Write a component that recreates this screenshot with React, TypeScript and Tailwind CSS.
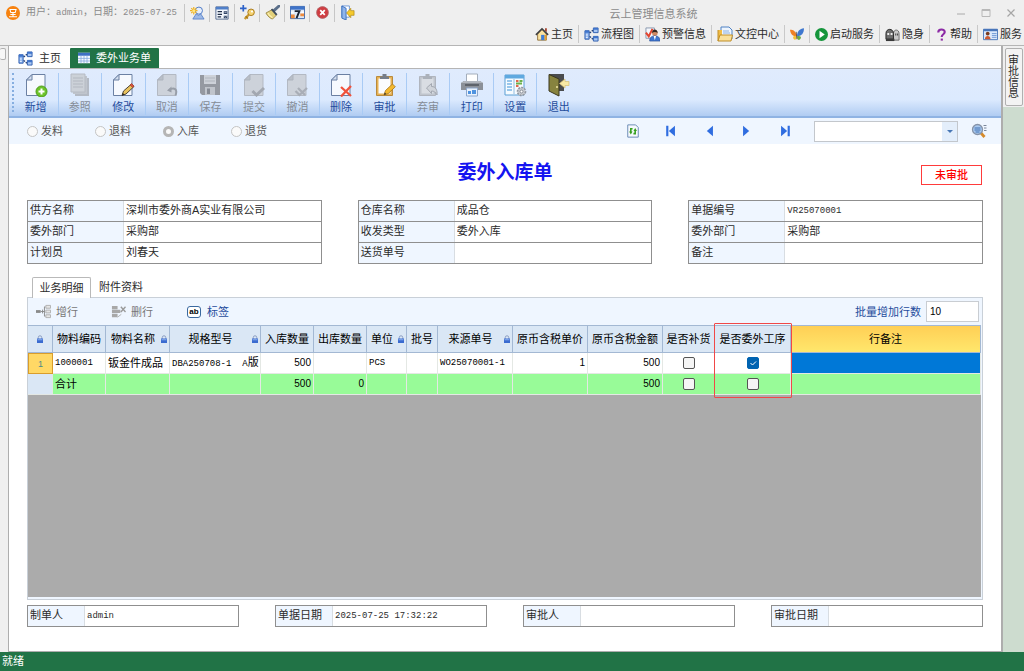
import type { ReactNode } from "react";

const Svg = ({ size = 14, box = 16, children }: { size?: number; box?: number; children: ReactNode }) => (
  <svg width={size} height={size} viewBox={`0 0 ${box} ${box}`} className="shrink-0" fill="none" aria-hidden="true">
    {children}
  </svg>
);

/* ---------- small icons ---------- */

const LogoIcon = () => (
  <Svg size={14}>
    <circle cx="8" cy="8" r="8" fill="#f7820f" />
    <path d="M4.500 4h7l-1 3.500h-5zM8 7.500V12M5 9.700h6M3.500 12.300h9" stroke="#fff" strokeWidth="1.200" />
  </Svg>
);
const UserIcon = () => (
  <Svg size={15}>
    <path d="M3 15l3.500-5.500L9 11l2.500-1.500L15 15z" fill="#9db9e6" stroke="#4a76c4" strokeWidth=".8" />
    <circle cx="9.500" cy="6" r="3.800" fill="#e7effb" stroke="#4a76c4" />
    <path d="M4 2v8M0 6h8M1.300 3.300l5.400 5.400M6.700 3.300L1.300 8.700" stroke="#f0b323" strokeWidth="1.300" />
    <circle cx="4" cy="6" r="1.600" fill="#ffe680" />
  </Svg>
);
const FormIcon = () => (
  <Svg>
    <path d="M1 1h14v14H1z" fill="#f3f7fd" stroke="#4a6288" />
    <path d="M1 1h14v3H1z" fill="#4f7fc9" />
    <path d="M3 6.500h5M3 9.500h5M3 12.500h4" stroke="#22304a" strokeWidth="1.500" />
    <path d="M10 6h4v3h-4zM10 11h4v3h-4z" fill="#2f4366" />
    <path d="M11 7l1 1 1-1M11 12l1 1 1-1" stroke="#fff" strokeWidth=".7" />
  </Svg>
);
const KeyIcon = () => (
  <Svg size={15}>
    <path d="M3.500 0v7M0 3.500h7" stroke="#2d62c8" strokeWidth="1.800" />
    <path d="M10 9.500L5 15" stroke="#c99a2e" strokeWidth="2.400" />
    <circle cx="11.800" cy="7.800" r="3.500" fill="#f5d372" stroke="#a9791a" />
    <circle cx="12.800" cy="7" r="1.100" fill="#fff" />
    <path d="M6 12l2.500 2.500" stroke="#a9791a" strokeWidth="1.500" />
  </Svg>
);
const BrushIcon = () => (
  <Svg size={15}>
    <path d="M15 1l-5.500 5" stroke="#5b6f8a" strokeWidth="3" strokeLinecap="round" />
    <path d="M1 8.500L7.500 5l5 5.500L8 15c-2-.5-5.500-3-7-6.500z" fill="#e3d079" stroke="#8e7a35" strokeWidth=".8" />
    <path d="M7 4.500l5.500 6" stroke="#3e4c5c" strokeWidth="2" />
    <path d="M3 8.500c1.500 2.500 3 4 5 5" stroke="#fff3b5" strokeWidth="1.200" />
  </Svg>
);
const CalendarIcon = () => (
  <Svg size={15}>
    <path d="M.5 1.500h15v13H.5z" fill="#dfe9f8" stroke="#3f66a8" />
    <path d="M.5 1.500h15V5H.5z" fill="#3f74c9" />
    <path d="M1 7h3v2H1zM12 7h3v2h-3z" fill="#fff" />
    <path d="M1 10h4v4H1zM11 9h4v3h-4z" fill="#ee8b3d" />
    <path d="M5 6.500h5L7 14" stroke="#1c2433" strokeWidth="2" />
  </Svg>
);
const CloseIcon = () => (
  <Svg size={13}>
    <circle cx="8" cy="8" r="7.300" fill="#cf3d42" stroke="#b06a6c" />
    <path d="M5.200 5.200l5.600 5.600M10.800 5.200l-5.600 5.600" stroke="#fff" strokeWidth="2.200" />
  </Svg>
);
const LogoutIcon = () => (
  <Svg size={15}>
    <path d="M2 1h8v12H2z" fill="#fff" stroke="#6c96d6" />
    <path d="M2 1l4.500 2.500V16L2 14z" fill="#8fb5ec" stroke="#2e65b8" strokeWidth=".9" />
    <path d="M15 6v5h-3.500v2.500L7 8.500l4.500-5V6z" fill="#f5c92c" stroke="#a98412" strokeWidth=".7" />
  </Svg>
);
const HomeIcon = () => (
  <Svg>
    <path d="M3 8v7h10V8L8 3z" fill="#fbe3a0" stroke="#8a6a35" />
    <path d="M11.500 1.500h2V6l-2-2z" fill="#a33d28" />
    <path d="M1 9l7-7 7 7" stroke="#3f3f3f" strokeWidth="1.800" />
    <path d="M7 9h4v6H7z" fill="#3f7ed6" />
    <path d="M11 9h2v6h-2z" fill="#eea22b" />
  </Svg>
);
const FlowIcon = () => (
  <Svg size={15}>
    <path d="M1 4h4.500v9H1z" fill="#8db4ee" stroke="#2f5eaf" />
    <path d="M10 1h5v5h-5zM10 10h5v5h-5z" fill="#a9c7f3" stroke="#2f5eaf" />
    <path d="M10 1h5v2h-5zM10 10h5v2h-5zM1 4h4.500v2H1z" fill="#3f74cc" />
    <path d="M6 6.500l3.500-3M6 10l3.500 3" stroke="#1d3a72" strokeWidth="1.400" strokeDasharray="2 1" />
    <path d="M2 8.500h2M2 11h2" stroke="#fff" />
  </Svg>
);
const AlertIcon = () => (
  <Svg size={15}>
    <path d="M1 1h9v11H1z" fill="#f4f7fc" stroke="#8796ad" />
    <path d="M1 6l3 4 4-8" stroke="#e2452f" strokeWidth="2.200" />
    <circle cx="10.500" cy="6.500" r="3" fill="#d08a62" />
    <path d="M7.500 6.500c0-5 6-5 6 0-1.500-1.500-4.500-1.500-6 0z" fill="#35261f" />
    <path d="M5 15c0-4 2-5.500 5.500-5.500S16 11 16 15z" fill="#3f76cf" stroke="#274f97" strokeWidth=".7" />
    <path d="M9.200 9.700l1.300 4.300 1.300-4.300z" fill="#fff" />
  </Svg>
);
const DocIcon = () => (
  <Svg size={16}>
    <path d="M4 1h8l3 3v9H4z" fill="#eef5fd" stroke="#4f82c4" />
    <path d="M1 4h4v9H1z" fill="#f0bb45" />
    <path d="M6 5h6M6 7h7" stroke="#8cb0e0" />
    <path d="M1 15l2-6h12.500l-1.500 6z" fill="#fae09a" stroke="#c08f28" />
    <path d="M1 15V4" stroke="#c08f28" />
  </Svg>
);
const ButterflyIcon = () => (
  <Svg>
    <path d="M8 10.500C6 4 4 3 0 3c.5 5 3 7.500 8 7.500z" fill="#f08024" />
    <path d="M8 10.500C8 5 11 2 16 1.500c0 6-3 9-8 9z" fill="#3f78cf" />
    <path d="M7.500 10C4.500 9.500 2.500 11 4 13.500 6 16 8 13.500 7.500 10z" fill="#f6c13a" />
    <path d="M8 10.500c3.500-1 5.500.5 4 3-1.500 2.500-4 1-4-3z" fill="#6bab45" />
    <path d="M7 5.500l1 8.500" stroke="#5c4638" />
  </Svg>
);
const PlayIcon = () => (
  <Svg size={13}>
    <circle cx="8" cy="8" r="8" fill="#15953b" />
    <path d="M5.500 3.500l6.500 4.500-6.500 4.500z" fill="#fff" />
  </Svg>
);
const GhostIcon = () => (
  <Svg size={15}>
    <path d="M9 14V7c0-5 6-5 6 0v7z" fill="#c9c9c9" stroke="#6a6a6a" />
    <path d="M1 13V7c0-6 8-6 8 0v6z" fill="#6d6d6d" stroke="#262626" />
    <path d="M1 12.500h9V15H1z" fill="#3a3a3a" />
    <path d="M2.500 6.500h2v2h-2zM6 6.500h2v2H6z" fill="#eee" />
    <path d="M11 7h1v2h-1zM13 7h1v2h-1z" fill="#333" />
  </Svg>
);
const HelpIcon = () => (
  <Svg size={13}>
    <path d="M4 5.500C4 .8 12 .8 12 5c0 2.700-3.800 2.700-3.800 6" stroke="#8c2aa5" strokeWidth="2.600" />
    <path d="M7 13h2.700v2.500H7z" fill="#8c2aa5" />
  </Svg>
);
const CardIcon = () => (
  <Svg size={15}>
    <path d="M.5 2.500h15v11H.5z" fill="#dce9fb" stroke="#4976ba" />
    <path d="M.5 2h15v2.500H.5z" fill="#4976ba" />
    <path d="M9.500 7h5M9.500 9h5M9.500 11h5" stroke="#6f97d4" />
    <circle cx="5" cy="7" r="2" fill="#7b3b20" />
    <path d="M2 13c0-4.500 6-4.500 6 0z" fill="#cd5a32" />
  </Svg>
);
const GridIcon = () => (
  <Svg size={12}>
    <path d="M0 1h16v14H0z" fill="#f4f8ff" />
    <path d="M0 1h16v4H0z" fill="#3f70c4" />
    <path d="M0 8.500h16M0 12h16M4 5v10M8 5v10M12 5v10" stroke="#7fa4dc" />
  </Svg>
);
const RefreshIcon = () => (
  <Svg>
    <path d="M2 1h9l3 3v11H2z" fill="#f6f9fd" stroke="#5d7fae" />
    <path d="M7.500 5.500H5.500V9M8.500 11h2V7.500" stroke="#36a01d" strokeWidth="1.800" />
    <path d="M3.500 8.500h4L5.500 12zM8.500 8h4l-2-3.500z" fill="#36a01d" />
  </Svg>
);
const NavIcon = ({ flip = false, bar = false }: { flip?: boolean; bar?: boolean }) => (
  <Svg>
    <g transform={flip ? "matrix(-1 0 0 1 16 0)" : undefined}>
      <path d="M12.500 2v12L5.500 8z" fill="#2f6de0" />
      {bar && <path d="M2.500 2H5v12H2.500z" fill="#2f6de0" />}
    </g>
  </Svg>
);
const SearchIcon = () => (
  <Svg size={16}>
    <path d="M9.500 9.500l4 4.500" stroke="#d68a2a" strokeWidth="2.800" />
    <circle cx="6.500" cy="6.500" r="5" fill="#a9c9ef" stroke="#8693a8" strokeWidth="1.300" />
    <path d="M3.500 5h6M3.500 7h6M4.500 9h4" stroke="#3e6fb0" />
    <path d="M12.500 2.500h3M13 5h2.500M13 7.500h2.500" stroke="#7b879a" />
  </Svg>
);
const LockIcon = () => (
  <Svg size={8}>
    <path d="M4.500 8V5a3.500 3.500 0 017 0v3" stroke="#8d9fc4" strokeWidth="2" />
    <path d="M2 7h12v9H2z" fill="#3a6bd0" />
    <path d="M3 9.500h10" stroke="#8db0ee" strokeWidth="2" />
  </Svg>
);
const AddRowIcon = () => (
  <Svg size={15}>
    <path d="M0 6.500h5v3H0z" fill="#8a8a8a" />
    <path d="M5 8h4M7 6v4M10 3H9v10h1" stroke="#8a8a8a" />
    <path d="M10.500 1.500h5v3h-5zM10.500 6.500h5v3h-5zM10.500 11.500h5v3h-5z" fill="#e6e6e6" stroke="#b0b0b0" />
  </Svg>
);
const DelRowIcon = () => (
  <Svg size={15}>
    <path d="M1 2h6v3.500H1zM1 6h9v3.500H1zM1 10.500h6V14H1z" fill="#a8a8a8" />
    <path d="M7 14l4-3" stroke="#b0b0b0" />
    <path d="M10.500 3l5 5.500M15.500 3l-5 5.500" stroke="#9a9a9a" strokeWidth="1.500" />
  </Svg>
);

/* ---------- toolbar icons, 24 unit box ---------- */

const Page = ({ gray = false }: { gray?: boolean }) => (
  <>
    <path d="M8 1.500h13v21H2.500V7z" fill={gray ? "#cdd2da" : "#f6f9fe"} stroke={gray ? "#b3b9c3" : "#6b80a3"} />
    <path d="M8 1.500V7H2.500z" fill={gray ? "#b9bfc8" : "#d3deee"} stroke={gray ? "#adb3bd" : "#6b80a3"} />
  </>
);
const Clip = ({ gray = false }: { gray?: boolean }) => (
  <>
    <path d="M3.500 3.500h16v19h-16z" fill={gray ? "#c0c5cd" : "#e6b154"} stroke={gray ? "#b0b5be" : "#b98a3c"} />
    <path d="M5.500 5.500h12v15h-12z" fill={gray ? "#d9dde3" : "#fbfcff"} />
    <path d="M7 6V3.500h2.500V1h4v2.500H16V6z" fill={gray ? "#abb1ba" : "#767e8a"} />
  </>
);

const toolIcons: Record<string, ReactNode> = {
  add: (
    <>
      <Page />
      <circle cx="17.500" cy="18.500" r="5.500" fill="#6cc32a" stroke="#4d9c1a" />
      <path d="M17.500 15.500v6M14.500 18.500h6" stroke="#fff" strokeWidth="2" />
    </>
  ),
  refer: (
    <>
      <path d="M7 5h14v18H7z" fill="#b4bac4" />
      <path d="M5 3h14v18H5z" fill="#c0c5cd" />
      <path d="M3 1h14v18H3z" fill="#ccd1d8" stroke="#b6bbc4" />
      <path d="M5 5h10M5 8h10M5 11h10M5 14h10" stroke="#b3b8c1" />
    </>
  ),
  edit: (
    <>
      <Page />
      <path d="M11 22.500l1.500-4.500 8-7 2.500 2.500-8 7.500z" fill="#e8c25c" stroke="#4d4436" />
      <path d="M19 12l1.500-1.500L23 13l-1.500 1.500z" fill="#d9543f" stroke="#a23a2a" strokeWidth=".6" />
      <path d="M11 22.500l.8-2.500 1.700 1.500z" fill="#222" />
    </>
  ),
  cancel: (
    <>
      <Page gray />
      <path d="M14 17c5-3 9-1 6.500 5.500" stroke="#989ea8" strokeWidth="2" />
      <path d="M12 17.500l4.500-4v6z" fill="#989ea8" />
    </>
  ),
  save: (
    <>
      <path d="M2 2h20v20H4l-2-2z" fill="#9599a1" />
      <path d="M6 2h12v9H6z" fill="#cdd1d8" />
      <path d="M7 14h10v8H7z" fill="#c0c4cb" />
      <path d="M9 15.500h3V21H9z" fill="#868b94" />
      <path d="M7 5h10M7 8h10" stroke="#b1b6be" />
    </>
  ),
  submit: (
    <>
      <Page gray />
      <path d="M10.500 18l4 4 7.500-7" stroke="#a3a8b1" strokeWidth="3" />
    </>
  ),
  revoke: (
    <>
      <Page gray />
      <path d="M10.500 18l4 4 7.500-7M13 15l7 7" stroke="#a9aeb7" strokeWidth="2.300" />
    </>
  ),
  remove: (
    <>
      <Page />
      <path d="M12 14l10 9M22 13L12 23.500" stroke="#f0523c" strokeWidth="2.300" />
    </>
  ),
  approve: (
    <>
      <Clip />
      <path d="M11 22l1.500-4.500 7-6.500 2.800 2.800-7 6.700z" fill="#f4b92e" stroke="#a3731a" strokeWidth=".8" />
      <path d="M11 22l.8-2.500 1.600 1.500z" fill="#333" />
    </>
  ),
  unapprove: (
    <>
      <Clip gray />
      <path d="M10.500 15l5-4.500v3c4.500 0 6 4 5.500 8.500-1.500-3-3-4-5.500-4v2.500z" fill="#cfd3d9" stroke="#a3a8b1" />
    </>
  ),
  print: (
    <>
      <path d="M6.500 1h11v9h-11z" fill="#fff" stroke="#a3adbb" />
      <path d="M1 10l3-2h16l3 2v7H1z" fill="#8b9098" />
      <path d="M4 8h16l3 2H1z" fill="#b0b5bd" />
      <path d="M5 12h14" stroke="#5e636b" strokeWidth="2" />
      <path d="M6.500 15h11v8h-11z" fill="#e9f2fd" stroke="#8ea7cb" />
      <path d="M8 18h3v3H8zM12 17h4v4h-4z" fill="#4f93e0" />
    </>
  ),
  setup: (
    <>
      <path d="M2 2h19v20H2z" fill="#f6fbff" stroke="#5b9fd4" />
      <path d="M2 2h19v3.500H2z" fill="#5fa9e0" />
      <path d="M4 8h5M4 11h5M4 14h5M4 17h5" stroke="#79b5e5" strokeWidth="1.500" />
      <path d="M11 6v15" stroke="#92bde0" />
      <path d="M13 8h2.500M13 13h2.500" stroke="#e2664b" strokeWidth="2" />
      <path d="M16.500 8h3M13 10.500h6" stroke="#6cb04b" strokeWidth="2" />
      <circle cx="18.500" cy="18.500" r="4" fill="#c9ccd1" stroke="#9298a1" strokeWidth="1.600" strokeDasharray="2 1" />
      <circle cx="18.500" cy="18.500" r="1.500" fill="#fff" stroke="#888e97" />
    </>
  ),
  exit: (
    <>
      <path d="M2 1h15v17H2z" fill="#4a4c4e" />
      <path d="M2 1.500l10 4.500v17L2 18z" fill="#87833f" stroke="#3b371e" />
      <path d="M10 13v2" stroke="#f2e6a4" strokeWidth="1.500" />
      <path d="M22 8.500v4h-4V15l-5.500-4.500L18 6v2.500z" fill="#f8e9a6" stroke="#d6bf74" strokeWidth=".7" />
    </>
  ),
};

/* ---------- data ---------- */

const quick = [
  { name: "切换用户", icon: <UserIcon /> },
  { name: "表单", icon: <FormIcon /> },
  { name: "修改密码", icon: <KeyIcon /> },
  { name: "清理", icon: <BrushIcon /> },
  { name: "日历", icon: <CalendarIcon /> },
  { name: "关闭", icon: <CloseIcon /> },
  { name: "注销", icon: <LogoutIcon /> },
];

const menu = [
  { text: "主页", icon: <HomeIcon /> },
  { text: "流程图", icon: <FlowIcon /> },
  { text: "预警信息", icon: <AlertIcon /> },
  { text: "文控中心", icon: <DocIcon /> },
  { text: "", icon: <ButterflyIcon /> },
  { text: "启动服务", icon: <PlayIcon /> },
  { text: "隐身", icon: <GhostIcon /> },
  { text: "帮助", icon: <HelpIcon /> },
  { text: "服务", icon: <CardIcon /> },
];

const tools = [
  { text: "新增", icon: "add" },
  { text: "参照", icon: "refer", off: true },
  { text: "修改", icon: "edit" },
  { text: "取消", icon: "cancel", off: true },
  { text: "保存", icon: "save", off: true },
  { text: "提交", icon: "submit", off: true },
  { text: "撤消", icon: "revoke", off: true },
  { text: "删除", icon: "remove" },
  { text: "审批", icon: "approve" },
  { text: "弃审", icon: "unapprove", off: true },
  { text: "打印", icon: "print" },
  { text: "设置", icon: "setup" },
  { text: "退出", icon: "exit" },
];

type Field = { label: string; value: string; latin?: boolean };

const groups: Field[][] = [
  [
    { label: "供方名称", value: "深圳市委外商A实业有限公司" },
    { label: "委外部门", value: "采购部" },
    { label: "计划员", value: "刘春天" },
  ],
  [
    { label: "仓库名称", value: "成品仓" },
    { label: "收发类型", value: "委外入库" },
    { label: "送货单号", value: "" },
  ],
  [
    { label: "单据编号", value: "VR25070001", latin: true },
    { label: "委外部门", value: "采购部" },
    { label: "备注", value: "" },
  ],
];

const footer: Field[] = [
  { label: "制单人", value: "admin", latin: true },
  { label: "单据日期", value: "2025-07-25 17:32:22", latin: true },
  { label: "审批人", value: "" },
  { label: "审批日期", value: "" },
];

const columns: { name: string; width: string; lock?: boolean }[] = [
  { name: "物料编码", width: "w-[53px]" },
  { name: "物料名称", width: "w-[64px]", lock: true },
  { name: "规格型号", width: "w-[91px]", lock: true },
  { name: "入库数量", width: "w-[53px]" },
  { name: "出库数量", width: "w-[53px]" },
  { name: "单位", width: "w-[40px]", lock: true },
  { name: "批号", width: "w-[31px]" },
  { name: "来源单号", width: "w-[75px]", lock: true },
  { name: "原币含税单价", width: "w-[75px]" },
  { name: "原币含税金额", width: "w-[75px]" },
  { name: "是否补货", width: "w-[52px]" },
];

const mono = "font-['Liberation_Mono','Noto_Sans_CJK_SC',monospace] text-[9px]";

const FieldRow = ({ id, field, narrow = false }: { id: string; field: Field; narrow?: boolean }) => (
  <div className="flex h-[21px] border-b border-[#8f8f8f]">
    <label
      htmlFor={id}
      className={`${narrow ? "w-[57px]" : "w-24"} shrink-0 border-r border-[#d8dde2] bg-[#eff6ff] pl-[2px] leading-[19px]`}
    >
      {field.label}
    </label>
    <input
      id={id}
      defaultValue={field.value}
      className={`min-w-0 flex-1 bg-white px-[2px] outline-none ${field.latin ? mono : "pb-[2px]"}`}
    />
  </div>
);

const Check = ({ label, checked = false }: { label: string; checked?: boolean }) => (
  <span className="mx-auto grid size-3 place-items-center">
    <input
      type="checkbox"
      aria-label={label}
      defaultChecked={checked}
      className="peer col-start-1 row-start-1 size-3 appearance-none rounded-[2px] border border-[#555] bg-[#f5f5f5] checked:border-[#0063b1] checked:bg-[#0063b1]"
    />
    <svg
      viewBox="0 0 12 12"
      fill="none"
      className="pointer-events-none invisible col-start-1 row-start-1 size-3 peer-checked:visible"
    >
      <path d="M3.500 6l2 2 3.500-3.500" stroke="#fff" />
    </svg>
  </span>
);

export default function App() {
  return (
    <div className="flex h-screen flex-col overflow-hidden bg-[#efefef] font-['Liberation_Sans','Noto_Sans_CJK_SC',sans-serif] text-[11px] leading-4 text-[#2b2b2b]">
      <header className="shrink-0 border-b border-[#b5b5b5]">
        <div className="flex h-[25px] items-center text-[#8b8b8b]">
          <div className="flex w-[184px] items-center gap-[6px] pl-[6px]">
            <LogoIcon />
            <span className="flex-1 text-[10px] whitespace-nowrap">
              用户：<span className={mono}>admin</span>，日期：<span className={mono}>2025-07-25</span>
            </span>
          </div>
          <nav className="flex" aria-label="快捷工具">
            {quick.map((q) => (
              <button key={q.name} aria-label={q.name} className="grid h-[18px] w-[25px] place-items-center border-l border-[#c6c6c6]">
                {q.icon}
              </button>
            ))}
          </nav>
          <h1 className="flex-1 pt-[3px] text-center">云上管理信息系统</h1>
          <div className="flex w-[76px]">
            <button aria-label="最小化" className="grid h-5 w-[25px] place-items-center">
              <Svg size={10} box={10}><path d="M1 6h8" stroke="#aaa" /></Svg>
            </button>
            <button aria-label="最大化" className="grid h-5 w-[25px] place-items-center">
              <Svg size={10} box={10}><path d="M1 1.500h8v7H1zM1 2.500h8" stroke="#b8b8b8" /></Svg>
            </button>
            <button aria-label="关闭窗口" className="grid h-5 w-[25px] place-items-center">
              <Svg size={10} box={10}><path d="M1.500 1.500l7 7M8.500 1.500l-7 7" stroke="#a5a5a5" strokeWidth="1.200" /></Svg>
            </button>
          </div>
        </div>
        <nav className="flex h-5 items-start justify-end" aria-label="主菜单">
          {menu.map((m, i) => (
            <button
              key={i}
              aria-label={m.text || "皮肤"}
              className={`flex h-[18px] items-center gap-[2px] pr-[5px] pl-[5px] last:pr-[2px] ${i ? "border-l border-[#c9c9c9]" : ""}`}
            >
              {m.icon}
              {m.text && <span>{m.text}</span>}
            </button>
          ))}
        </nav>
      </header>

      <div className="flex min-h-0 flex-1">
        <aside className="w-2 shrink-0">
          <div className="mt-[2px] h-3 w-[6px] rounded-[2px] border border-l-0 border-[#b0b0b0] bg-[#f7f7f7]" />
        </aside>

        <main className="flex min-w-0 flex-1 flex-col border-r-2 border-b border-l border-[#adadad] bg-white">
          <div className="flex h-[23px] shrink-0 items-end border-b border-[#b5b5b5]">
            <button className="flex h-5 w-[61px] items-center gap-[6px] pl-[9px]">
              <FlowIcon />
              主页
            </button>
            <button className="flex h-5 items-center gap-[6px] rounded-t-[1px] bg-[#217346] px-2 text-white">
              <GridIcon />
              委外业务单
            </button>
          </div>

          <div className="flex h-[49px] shrink-0 items-stretch border-b-2 border-[#8fb3e3] bg-linear-to-b from-[#e0ebfd] via-[#dceafe] via-65% to-[#b0ccf2] py-1 pl-[3px]">
            <div className="w-[2px] border-l-2 border-dotted border-[#86aee0]" />
            <div className="grid w-[566px] grid-cols-13">
              {tools.map((t, i) => (
                <button
                  key={t.text}
                  disabled={t.off}
                  className={`flex flex-col items-center gap-[2px] whitespace-nowrap ${i ? "border-l border-[#a9cbf5]" : ""} ${t.off ? "text-[#858c96]" : "text-[#1f4c9c]"}`}
                >
                  <Svg size={24} box={24}>{toolIcons[t.icon]}</Svg>
                  <span>{t.text}</span>
                </button>
              ))}
            </div>
          </div>

          <div className="flex h-[26px] shrink-0 items-center bg-[#eff6ff] pr-3 pl-[18px]">
            <fieldset className="flex">
              {["发料", "退料", "入库", "退货"].map((r) => (
                <label key={r} className="flex w-[68px] items-center gap-[3px] text-[#555]">
                  <input
                    type="radio"
                    name="kind"
                    defaultChecked={r === "入库"}
                    className="size-[11px] appearance-none rounded-full border border-[#c4c4c4] bg-[#fafafa] checked:border-[3px] checked:border-[#b5b5b5]"
                  />
                  {r}
                </label>
              ))}
            </fieldset>
            <div className="ml-auto flex items-center">
              <button aria-label="刷新" className="grid w-[38px] place-items-center"><RefreshIcon /></button>
              <button aria-label="首张" className="grid w-[38px] place-items-center"><NavIcon bar /></button>
              <button aria-label="上一张" className="grid w-[38px] place-items-center"><NavIcon /></button>
              <button aria-label="下一张" className="grid w-[38px] place-items-center"><NavIcon flip /></button>
              <button aria-label="末张" className="grid w-[38px] place-items-center"><NavIcon flip bar /></button>
              <div className="mr-[11px] ml-[10px] grid w-36">
                <select
                  aria-label="查询条件"
                  className="col-start-1 row-start-1 h-[21px] appearance-none border border-[#c3c7cc] bg-white outline-none"
                >
                  <option value=""></option>
                </select>
                <span className="pointer-events-none col-start-1 row-start-1 m-[1px] grid w-[15px] place-items-center justify-self-end bg-[#e3eefb]">
                  <Svg size={6} box={6}><path d="M0 2h6L3 5z" fill="#4877b5" /></Svg>
                </span>
              </div>
              <button aria-label="查找" className="grid w-5 place-items-center"><SearchIcon /></button>
            </div>
          </div>

          <div className="flex min-h-0 flex-1 flex-col px-[18px] pb-6">
            <div className="grid h-14 shrink-0 grid-cols-[1fr_auto_1fr] items-start pt-[15px]">
              <h2 className="col-start-2 text-[19px] leading-7 font-bold text-[#1414f0]">委外入库单</h2>
              <span className="mt-[6px] mr-[1px] w-[61px] justify-self-end border border-[#ff3b3b] text-center leading-[18px] font-medium text-[#f00]">
                未审批
              </span>
            </div>

            <div className="grid shrink-0 grid-cols-3 gap-9">
              {groups.map((g, gi) => (
                <div key={gi} className="border border-b-0 border-[#8f8f8f]">
                  {g.map((f, fi) => (
                    <FieldRow key={fi} id={`head-${gi}-${fi}`} field={f} />
                  ))}
                </div>
              ))}
            </div>

            <div className="mt-[11px] flex h-[22px] shrink-0 items-end pl-[5px]" role="tablist">
              <button role="tab" aria-selected="true" className="z-10 -mb-px h-[21px] w-[59px] rounded-t-[2px] border border-b-0 border-[#b9b9b9] bg-white">
                业务明细
              </button>
              <button role="tab" aria-selected="false" className="h-5 px-2">附件资料</button>
            </div>

            <section className="flex min-h-0 flex-1 flex-col border border-[#c9d0d8] bg-[#eff6ff]">
              <div className="flex h-[27px] shrink-0 items-center pl-2 text-[#777]">
                <button disabled className="flex w-[75px] items-center gap-[5px]"><AddRowIcon />增行</button>
                <button disabled className="flex w-[76px] items-center gap-[5px]"><DelRowIcon />删行</button>
                <button className="flex items-center gap-[6px] text-[#1f4c9c]">
                  <span className="grid h-3 w-[14px] place-items-center rounded-[3px] border border-[#3a699f] bg-white text-[8px] leading-none font-bold text-black">
                    ab
                  </span>
                  标签
                </button>
                <label htmlFor="rows" className="ml-auto text-[#1f4c9c]">批量增加行数</label>
                <input id="rows" defaultValue="10" className="mr-[3px] ml-[5px] h-[21px] w-[53px] border border-[#c9cdd2] bg-white px-[3px] text-[10px] text-black outline-none" />
              </div>
              <div className="mr-[1px] mb-[2px] min-h-0 flex-1 bg-[#ababab]">
                <table className="w-full table-fixed border-separate border-spacing-0 text-black [&_td]:border-r [&_td]:border-b [&_td]:border-[#e4e8e4] [&_td]:px-[2px] [&_td]:whitespace-nowrap [&_th]:border-t [&_th]:border-r [&_th]:border-b [&_th]:border-[#a3b8d3] [&_th]:font-normal">
                  <thead>
                    <tr className="h-7 bg-[#dae7f5]">
                      <th className="w-[25px]"><span className="flex justify-center"><LockIcon /></span></th>
                      {columns.map((c) => (
                        <th key={c.name} className={`${c.width} whitespace-nowrap`}>
                          <span className="flex items-center justify-center">
                            <span className="flex-1">{c.name}</span>
                            {c.lock && <span className="pr-[1px]"><LockIcon /></span>}
                          </span>
                        </th>
                      ))}
                      <th className="relative w-[76px] whitespace-nowrap">
                        是否委外工序
                        <span className="pointer-events-none absolute -top-[3px] -left-[1px] h-[75px] w-[78px] rounded-[1px] border border-[#f04848]" />
                      </th>
                      <th className="bg-linear-to-b from-[#ffcf55] to-[#ffe76c]">行备注</th>
                    </tr>
                  </thead>
                  <tbody>
                    <tr className="h-[21px] bg-white">
                      <td className="border border-[#d99d2b]! bg-[#ffd865] text-center text-[9px] text-[#4a8a8a]">1</td>
                      <td className={mono}>1000001</td>
                      <td>钣金件成品</td>
                      <td className="leading-3"><span className={mono}>DBA250708-1&nbsp; A</span>版</td>
                      <td className="text-right text-[10px]">500</td>
                      <td></td>
                      <td className={mono}>PCS</td>
                      <td></td>
                      <td className={mono}>WO25070001-1</td>
                      <td className="text-right text-[10px]">1</td>
                      <td className="text-right text-[10px]">500</td>
                      <td><Check label="是否补货" /></td>
                      <td><Check label="是否委外工序" checked /></td>
                      <td className="bg-[#0078d7]"></td>
                    </tr>
                    <tr className="h-[21px] bg-[#98fb98]">
                      <td className="bg-[#dae7f5]"></td>
                      <td>合计</td>
                      <td></td>
                      <td></td>
                      <td className="text-right text-[10px]">500</td>
                      <td className="text-right text-[10px]">0</td>
                      <td></td>
                      <td></td>
                      <td></td>
                      <td></td>
                      <td className="text-right text-[10px]">500</td>
                      <td><Check label="合计是否补货" /></td>
                      <td><Check label="合计是否委外工序" /></td>
                      <td></td>
                    </tr>
                  </tbody>
                </table>
              </div>
            </section>

            <div className="mt-[5px] grid shrink-0 grid-cols-4 gap-9">
              {footer.map((f, i) => (
                <div key={i} className="border border-b-0 border-[#8f8f8f]">
                  <FieldRow id={`foot-${i}`} field={f} narrow />
                </div>
              ))}
            </div>
          </div>
        </main>

        <aside className="w-[21px] shrink-0 bg-[#cddccf]">
          <div className="h-[61px] bg-[#efefef] pt-[2px]">
            <button className="mx-auto flex h-[58px] w-[18px] flex-col items-center justify-center rounded-[2px] border border-[#b0b0b0] bg-[#f3f3f3] leading-[11px]">
              <span>审</span>
              <span>批</span>
              <span>信</span>
              <span>息</span>
            </button>
          </div>
        </aside>
      </div>

      <footer className="h-[19px] shrink-0 bg-[#217346] pl-[2px] leading-[18px] text-white">就绪</footer>
    </div>
  );
}
